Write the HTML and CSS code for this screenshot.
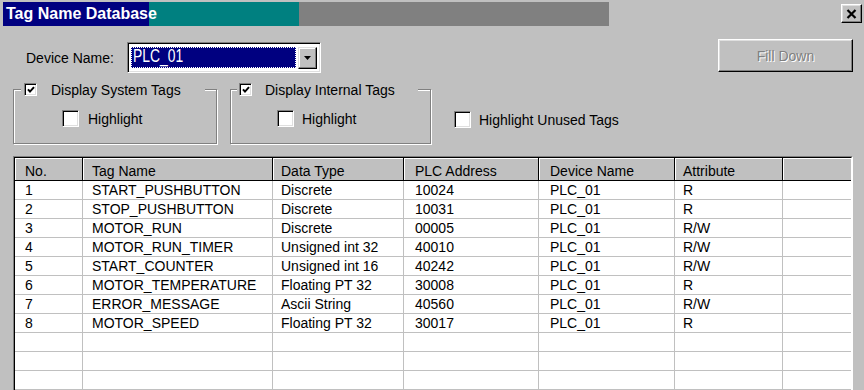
FILE: index.html
```html
<!DOCTYPE html>
<html lang="en">
<head>
<meta charset="utf-8">
<title>Tag Name Database</title>
<link rel="stylesheet" href="styles.css">
</head>
<body>
<div class="dialog">
  <div class="titlerow">
    <div class="titlebar"><span class="title">Tag Name Database</span></div>
    <button class="closebtn" aria-label="Close">
      <svg width="11" height="10" viewBox="0 0 11 10"><path d="M1.5 1 L9.5 9 M9.5 1 L1.5 9" stroke="#000" stroke-width="2.2" fill="none"/></svg>
    </button>
  </div>

  <div class="devicerow">
    <div class="devicefield">
      <span class="devlabel">Device Name:</span>
      <div class="combo">
        <div class="combo-value"><span class="combo-text">PLC_01</span></div>
        <div class="combo-arrow">
          <svg width="7" height="4" viewBox="0 0 7 4"><path d="M0 0 H7 L3.5 4 Z" fill="#000"/></svg>
        </div>
      </div>
    </div>
    <button class="btn disabled">Fill Down</button>
  </div>

  <div class="optrow">
    <fieldset class="group g1">
      <legend class="legend">
        <span class="chk sm"><svg width="8" height="8" viewBox="0 0 8 8"><path d="M1 3.3 L3 5.6 L7 1.2" stroke="#000" stroke-width="2" fill="none"/></svg></span>
        <span class="legend-text">Display System Tags</span>
      </legend>
      <div class="grp-body"><span class="chk big"></span><span>Highlight</span></div>
    </fieldset>
    <fieldset class="group g2">
      <legend class="legend">
        <span class="chk sm"><svg width="8" height="8" viewBox="0 0 8 8"><path d="M1 3.3 L3 5.6 L7 1.2" stroke="#000" stroke-width="2" fill="none"/></svg></span>
        <span class="legend-text">Display Internal Tags</span>
      </legend>
      <div class="grp-body"><span class="chk big"></span><span>Highlight</span></div>
    </fieldset>
    <div class="unused"><span class="chk big"></span><span>Highlight Unused Tags</span></div>
  </div>

  <div class="tablewrap">
    <table class="grid">
      <colgroup>
        <col class="c1"><col class="c2"><col class="c3"><col class="c4"><col class="c5"><col class="c6"><col class="c7">
      </colgroup>
      <thead>
        <tr><th>No.</th><th>Tag Name</th><th>Data Type</th><th>PLC Address</th><th>Device Name</th><th>Attribute</th><th></th></tr>
      </thead>
      <tbody>
        <tr><td>1</td><td>START_PUSHBUTTON</td><td>Discrete</td><td>10024</td><td>PLC_01</td><td>R</td><td></td></tr>
        <tr><td>2</td><td>STOP_PUSHBUTTON</td><td>Discrete</td><td>10031</td><td>PLC_01</td><td>R</td><td></td></tr>
        <tr><td>3</td><td>MOTOR_RUN</td><td>Discrete</td><td>00005</td><td>PLC_01</td><td>R/W</td><td></td></tr>
        <tr><td>4</td><td>MOTOR_RUN_TIMER</td><td>Unsigned int 32</td><td>40010</td><td>PLC_01</td><td>R/W</td><td></td></tr>
        <tr><td>5</td><td>START_COUNTER</td><td>Unsigned int 16</td><td>40242</td><td>PLC_01</td><td>R/W</td><td></td></tr>
        <tr><td>6</td><td>MOTOR_TEMPERATURE</td><td>Floating PT 32</td><td>30008</td><td>PLC_01</td><td>R</td><td></td></tr>
        <tr><td>7</td><td>ERROR_MESSAGE</td><td>Ascii String</td><td>40560</td><td>PLC_01</td><td>R/W</td><td></td></tr>
        <tr><td>8</td><td>MOTOR_SPEED</td><td>Floating PT 32</td><td>30017</td><td>PLC_01</td><td>R</td><td></td></tr>
        <tr><td></td><td></td><td></td><td></td><td></td><td></td><td></td></tr>
        <tr><td></td><td></td><td></td><td></td><td></td><td></td><td></td></tr>
        <tr><td></td><td></td><td></td><td></td><td></td><td></td><td></td></tr>
        <tr><td></td><td></td><td></td><td></td><td></td><td></td><td></td></tr>
      </tbody>
    </table>
  </div>
</div>
</body>
</html>
```

FILE: styles.css
```css
html, body {
  margin: 0;
  padding: 0;
}
body {
  width: 864px;
  height: 390px;
  overflow: hidden;
  background: #c0c0c0;
  font-family: "Liberation Sans", Arial, sans-serif;
  font-size: 14px;
  color: #000;
}
.dialog {
  width: 864px;
  height: 390px;
  overflow: hidden;
}

/* title row */
.titlerow {
  display: flex;
  align-items: flex-start;
  padding: 2px 2px 0 3px;
}
.titlebar {
  width: 606px;
  height: 24px;
  background: linear-gradient(to right, #000080 0, #000080 146px, #008080 146px, #008080 296px, #808080 296px, #808080 100%);
}
.title {
  display: block;
  padding-left: 3px;
  line-height: 24px;
  font-size: 16px;
  font-weight: bold;
  color: #fff;
  white-space: nowrap;
}
.closebtn {
  margin: 2px 0 0 auto;
  box-sizing: border-box;
  width: 21px;
  height: 19px;
  padding: 0;
  display: flex;
  align-items: center;
  justify-content: center;
  background: #c0c0c0;
  border: 1px solid;
  border-color: #fff #000 #000 #fff;
  box-shadow: inset -1px -1px 0 #808080, inset 1px 1px 0 #dfdfdf;
}

/* device row */
.devicerow {
  display: flex;
  align-items: flex-start;
  margin-top: 13px;
  padding: 0 11px 0 26px;
}
.devicefield {
  display: flex;
  align-items: center;
  margin-top: 3px;
}
.devlabel {
  width: 101px;
  flex: none;
}
.combo {
  box-sizing: border-box;
  width: 194px;
  height: 31px;
  display: flex;
  align-items: center;
  gap: 2px;
  padding: 0 3px;
  background: #fff;
  border: 1px solid;
  border-color: #808080 #fff #fff #808080;
  box-shadow: inset 1px 1px 0 #000, inset -1px -1px 0 #dfdfdf;
}
.combo-value {
  flex: 1;
  box-sizing: border-box;
  height: 21px;
  background: #000080;
  border: 1px dotted #fff;
  padding-left: 1px;
  color: #fff;
}
.combo-text {
  display: inline-block;
  font-size: 19px;
  line-height: 16px;
  transform: scaleX(0.73);
  transform-origin: left center;
  white-space: nowrap;
}
.combo-arrow {
  box-sizing: border-box;
  width: 19px;
  height: 22px;
  flex: none;
  display: flex;
  align-items: center;
  justify-content: center;
  background: #c0c0c0;
  border: 1px solid;
  border-color: #dfdfdf #000 #000 #dfdfdf;
  box-shadow: inset -1px -1px 0 #808080, inset 1px 1px 0 #fff;
}
.btn {
  margin-left: auto;
  box-sizing: border-box;
  width: 135px;
  height: 33px;
  padding: 0;
  font-family: inherit;
  font-size: 14px;
  background: #c0c0c0;
  border: 1px solid;
  border-color: #fff #000 #000 #fff;
  box-shadow: inset -1px -1px 0 #808080, inset 1px 1px 0 #dfdfdf;
}
.btn.disabled {
  color: #808080;
  text-shadow: 1px 1px 0 #fff;
}

/* option groups */
.optrow {
  display: flex;
  align-items: flex-start;
  margin-top: 8px;
  padding-left: 13px;
}
.group {
  margin: 0;
  padding: 0;
  min-width: 0;
  box-sizing: border-box;
  height: 63px;
  border: 1px solid #808080;
  box-shadow: inset 1px 1px 0 #fff, 1px 1px 0 #fff;
}
.g1 { width: 204px; }
.g2 { width: 201px; margin-left: 13px; }
.legend {
  box-sizing: border-box;
  height: 17px;
  display: flex;
  align-items: center;
  background: #c0c0c0;
  white-space: nowrap;
}
.g1 .legend { width: 184px; margin-left: 7px; padding: 0 0 0 3px; }
.g2 .legend { width: 181px; margin-left: 6px; padding: 0 0 0 2px; }
.g1 .legend-text { margin-left: 14px; }
.g2 .legend-text { margin-left: 13px; }
.grp-body {
  display: flex;
  align-items: center;
  gap: 8px;
  margin-top: 12px;
}
.g1 .grp-body { padding-left: 48px; gap: 9px; }
.g2 .grp-body { padding-left: 46px; }
.unused {
  display: flex;
  align-items: center;
  gap: 8px;
  margin: 30px 0 0 23px;
}

/* checkboxes */
.chk {
  display: flex;
  align-items: center;
  justify-content: center;
  flex: none;
  box-sizing: border-box;
  background: #fff;
  border: 1px solid;
  border-color: #808080 #fff #fff #808080;
  box-shadow: inset 1px 1px 0 #000, inset -1px -1px 0 #dfdfdf;
}
.chk.sm { width: 13px; height: 13px; }
.chk.big { width: 17px; height: 17px; }

/* table */
.tablewrap {
  margin: 12px 0 0 13px;
  width: 840px;
  height: 234px;
  overflow: hidden;
  box-sizing: border-box;
  border-style: solid;
  border-width: 1px 1px 0 1px;
  border-color: #808080 #fff #fff #808080;
}
.grid {
  width: 838px;
  table-layout: fixed;
  border-collapse: separate;
  border-spacing: 0;
  background: #fff;
  border-style: solid;
  border-width: 1px 1px 0 1px;
  border-color: #000 #fff #fff #000;
}
.c1 { width: 68px; }
.c2 { width: 190px; }
.c3 { width: 131px; }
.c4 { width: 135px; }
.c5 { width: 136px; }
.c6 { width: 108px; }
.c7 { width: 68px; }
.grid th {
  background: #c0c0c0;
  font-weight: normal;
  text-align: left;
  line-height: 14px;
  padding: 6px 0 2px;
  border-right: 1px solid #000;
  border-bottom: 1px solid #000;
  box-shadow: inset 1px 1px 0 #fff;
  white-space: nowrap;
  overflow: hidden;
}
.grid th:last-child { border-right: 0; }
.grid td {
  height: 18px;
  line-height: 18px;
  padding: 0;
  border-right: 1px solid #c0c0c0;
  border-bottom: 1px solid #c0c0c0;
  white-space: nowrap;
  overflow: hidden;
}
.grid td:last-child { border-right: 0; }
.grid th:nth-child(1), .grid td:nth-child(1) { padding-left: 10px; }
.grid th:nth-child(2), .grid td:nth-child(2) { padding-left: 9px; }
.grid th:nth-child(3), .grid td:nth-child(3) { padding-left: 8px; }
.grid th:nth-child(4), .grid td:nth-child(4) { padding-left: 11px; }
.grid th:nth-child(5), .grid td:nth-child(5) { padding-left: 11px; }
.grid th:nth-child(6), .grid td:nth-child(6) { padding-left: 8px; }
```
